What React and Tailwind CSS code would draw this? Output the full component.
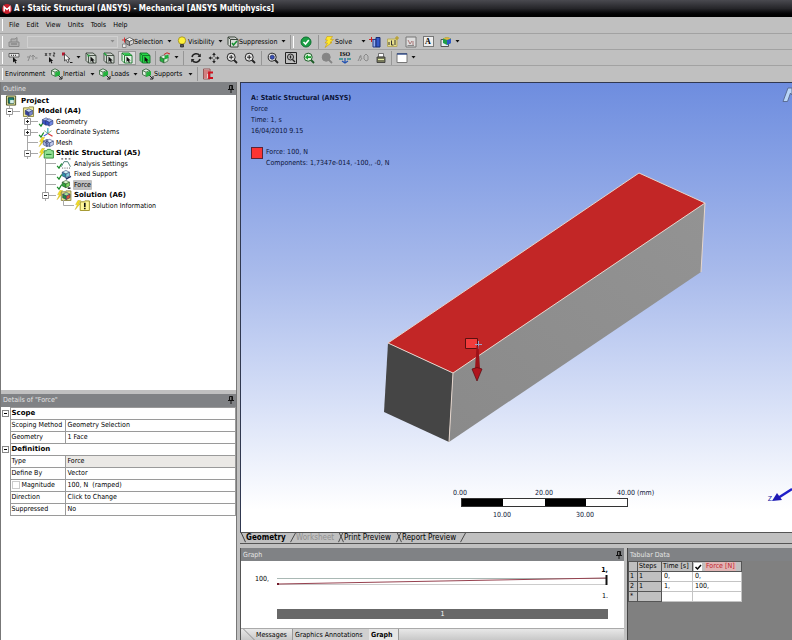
import React, { useState } from 'react';

const Icon = ({ children, className = 'w-3 h-3' }) => (
    <svg viewBox="0 0 12 12" className={`${className} shrink-0`} fill="none" stroke="#222" strokeWidth="1">
        {children}
    </svg>
);

const Cube = ({ top = '#c9d8f5', left = '#5a74c4', right = '#8fa4e0', line = '#2c3870', x = 0, y = 0 }) => (
    <g transform={`translate(${x} ${y})`} stroke={line} strokeWidth="0.6" strokeLinejoin="round">
        <path d="M1 3 L5 1 L9 3 L5 5 Z" fill={top} />
        <path d="M1 3 L5 5 L5 9 L1 7 Z" fill={left} />
        <path d="M5 5 L9 3 L9 7 L5 9 Z" fill={right} />
    </g>
);

const Pointer = ({ x = 0, y = 0, fill = '#111' }) => (
    <path transform={`translate(${x} ${y})`} d="M0 0 L0 5.5 L1.4 4.3 L2.4 6.5 L3.4 6 L2.5 4 L4.2 4 Z" fill={fill} stroke="none" />
);

const Bolt = ({ x = 0, y = 0 }) => (
    <path transform={`translate(${x} ${y})`} d="M3.5 0.5 L1 5 L3 5 L0.5 10.5 L6 4 L4 4 L6.5 0.5 Z" fill="#f7e11c" stroke="#c4ab1c" strokeWidth="0.5" />
);

// Heavier bolt for the Solve button
const SolveBolt = () => (
    <Icon>
        <path d="M4 0.5 H9.5 L7.5 3.5 H10.5 L7 6.5 H9 L2 11.5 L4.5 7 H2 L4.5 4 H2.5 Z" fill="#ffe92a" stroke="#c79a10" strokeWidth="0.6" />
    </Icon>
);

const Caret = ({ light }) => (
    <svg viewBox="0 0 5 3" className="h-[3px] w-[5px] shrink-0">
        <path d="M0.5 0 H4.5 L2.5 2.5 Z" fill={light ? '#8a8a8a' : '#111'} />
    </svg>
);

const Grip = () => <span className="mr-0.5 ml-0.5 h-3 w-px shrink-0 border-r border-white bg-[#8c8c8c]" />;
const Divider = ({ className = 'mx-0.5' }) => <span className={`${className} h-3.5 w-px shrink-0 bg-[#969696]`} />;

// Selection box with a cursor, one per pick filter
const PickIcon = ({ face = '#cfd6cf', edge = '#3c463c', mark }) => (
    <Icon>
        <path d="M1 1 H8 L11 3.5 V11 H3.5 L1 8.5 Z" fill={face} stroke={edge} strokeWidth="0.9" />
        <path d="M1 1 L3.5 3.5 H11 M3.5 3.5 V11" stroke={edge} strokeWidth="0.9" />
        {mark}
        <Pointer x={5.5} y={4.5} />
    </Icon>
);

const Magnifier = ({ children, fill = '#e6e6e6', stroke = '#222' }) => (
    <Icon>
        <path d="M8 8 L11 11" strokeWidth="1.8" stroke={stroke} />
        <circle cx="5.2" cy="5.2" r="4" fill={fill} stroke={stroke} />
        {children}
    </Icon>
);

const LoadIcon = () => (
    <Icon>
        <path d="M0.5 2.5 L4 0.8 L7.5 2.5 V6.5 L4 8.2 L0.5 6.5 Z" fill="#e4f2e4" stroke="#2d5a34" strokeWidth="0.8" />
        <path d="M0.5 2.5 L4 4.2 L7.5 2.5 M4 4.2 V8.2" stroke="#2d5a34" strokeWidth="0.8" />
        <path d="M4.2 4.4 L9 3 V7.2 L4.2 9 Z" fill="#22b33c" stroke="none" />
        <path d="M7.5 7.5 L10.5 10.5 M11 8 V11 H8" stroke="#111" strokeWidth="0.9" />
    </Icon>
);

const ToolButton = ({ label, className = 'w-[18px]', caret, children }) => (
    <button type="button" aria-label={label} className={`${className} flex h-3.5 shrink-0 items-center justify-center gap-[3px]`}>
        {children}
        {caret && <Caret />}
    </button>
);

const MenuButton = ({ label, icon, className, caret = true }) => (
    <button type="button" className={`${className} flex h-3.5 shrink-0 items-center whitespace-nowrap`}>
        {icon}
        <span>{label}</span>
        {caret && <span className="ml-auto"><Caret /></span>}
    </button>
);

const Pin = () => (
    <svg viewBox="0 0 6 8" className="h-2 w-1.5">
        <path d="M1.5 0.5 H4.5 V4.5 H1.5 Z M0 4.5 H6 M3 4.5 V8" fill="#777" stroke="#111" strokeWidth="1" />
        <path d="M4 0.5 V4.5" stroke="#111" strokeWidth="1.2" />
    </svg>
);

const PanelHeader = ({ title, pin = true }) => (
    <div className="flex h-[13px] shrink-0 items-center justify-between bg-[#808285] pr-0.5 pl-0.5 text-[#e4e4e4]">
        <h2>{title}</h2>
        {pin && <button type="button" aria-label={`Pin ${title}`}><Pin /></button>}
    </div>
);

const Check = () => <path d="M0.5 8.5 L2.5 11 L5.5 6" stroke="#188a28" strokeWidth="1.4" />;

const treeIcons = {
    project: (
        <>
            <path d="M3 1 H13 V11 H3 Z" fill="#e8e69a" stroke="#444a20" />
            <path d="M5 3 H11 V9 H5 Z" fill="#1b8a78" stroke="#133c38" />
            <path d="M7 5.5 H11 V9 H7 Z" fill="#d8efe8" stroke="none" />
        </>
    ),
    model: (
        <>
            <path d="M3 2 H8 L9 1 H14 V11.5 H3 Z" fill="#f0e99a" stroke="#8a8440" />
            <Cube x={4} y={2} left="#34409a" right="#7685cf" />
        </>
    ),
    geometry: (
        <>
            <Check />
            <Cube x={3} y={1} top="#a8bdf5" left="#3953c5" right="#6f88e6" />
            <Cube x={6.5} y={2} top="#a8bdf5" left="#3953c5" right="#6f88e6" />
        </>
    ),
    axes: (
        <>
            <Check />
            <path d="M10 7 V1" stroke="#22a5b5" strokeWidth="1.2" />
            <path d="M10 7 L5.5 10" stroke="#3250d8" strokeWidth="1.2" />
            <path d="M10 7 L15 10" stroke="#d83232" strokeWidth="1.2" />
            <path d="M6 4 L10 7 L14 4" stroke="#59a868" strokeWidth="0.8" />
        </>
    ),
    mesh: (
        <>
            <Bolt />
            <Cube x={4} y={1.5} top="#e4eafa" left="#a9b6e2" right="#c4cff0" />
            <Cube x={7} y={1.5} top="#e4eafa" left="#a9b6e2" right="#c4cff0" />
            <path d="M7 3.5 L11 5.5 M7 6 L11 8 M9 2.5 V9" stroke="#2c3870" strokeWidth="0.5" />
        </>
    ),
    structural: (
        <>
            <Bolt />
            <path d="M6 3 H8.5 L9.5 1.5 H13 L14 3 H16 V11 H6 Z" fill="#93e293" stroke="#2f8a35" />
            <path d="M8 7 H14" stroke="#15702a" />
        </>
    ),
    settings: (
        <>
            <Check />
            <path d="M5 1 H15" stroke="#222" strokeDasharray="2 2" />
            <path d="M5 9.5 L8 4 H12 L15 9.5" stroke="#2e6d60" strokeWidth="0.9" />
            <path d="M6 11 H15" stroke="#444" strokeDasharray="1 1.5" />
        </>
    ),
    support: (
        <>
            <Check />
            <Cube x={5} y={0.5} top="#d0f2f5" left="#2b91a5" right="#83ced9" />
            <path d="M10 11 L15.5 8" stroke="#1a2c60" strokeWidth="1.6" />
        </>
    ),
    force: (
        <>
            <Check />
            <Cube x={5} y={0.5} top="#d8f5c8" left="#2fa53a" right="#86d865" line="#1d4a1d" />
            <path d="M12 10 H15" stroke="#111" strokeWidth="1.6" />
        </>
    ),
    solution: (
        <>
            <Bolt />
            <path d="M5 2 H9 L10 1 H15.5 V11.5 H5 Z" fill="#efe58a" stroke="#8a8440" />
            <Cube x={5.5} y={1.5} top="#a8e290" left="#228a3a" right="#d85038" />
        </>
    ),
    info: (
        <>
            <Bolt />
            <path d="M6 2 H10 L11 1 H16 V11.5 H6 Z" fill="#fff79a" stroke="#9a8c20" />
            <path d="M11 3 V7.5 M11 8.5 V10" stroke="#111" strokeWidth="1.8" />
        </>
    ),
};

const tree = [
    { label: 'Project', icon: 'project', bold: true, indent: 'pl-0.5' },
    { label: 'Model (A4)', icon: 'model', bold: true, indent: 'pl-[5px]', box: '-' },
    { label: 'Geometry', icon: 'geometry', indent: 'pl-[23px]', box: '+' },
    { label: 'Coordinate Systems', icon: 'axes', indent: 'pl-[23px]', box: '+' },
    { label: 'Mesh', icon: 'mesh', indent: 'pl-[23px]', box: 'line' },
    { label: 'Static Structural (A5)', icon: 'structural', bold: true, indent: 'pl-[23px]', box: '-' },
    { label: 'Analysis Settings', icon: 'settings', indent: 'pl-[41px]', box: 'line' },
    { label: 'Fixed Support', icon: 'support', indent: 'pl-[41px]', box: 'line' },
    { label: 'Force', icon: 'force', indent: 'pl-[41px]', box: 'line', selected: true },
    { label: 'Solution (A6)', icon: 'solution', bold: true, indent: 'pl-[41px]', box: '-' },
    { label: 'Solution Information', icon: 'info', indent: 'pl-[59px]', box: 'end' },
];

const Branch = ({ type }) => (
    <svg viewBox="0 0 14 11" className="h-[11px] w-3.5 shrink-0" fill="none" stroke="#a9a9a9" strokeWidth="1">
        {type === 'end' ? <path d="M3.5 0 V5.5 H14" /> : <path d="M3.5 0 V11 M3.5 5.5 H14" />}
        {(type === '+' || type === '-') && <path d="M0.5 2.5 H6.5 V8.5 H0.5 Z" fill="#fff" stroke="#999" />}
        {(type === '+' || type === '-') && <path d="M2 5.5 H5" stroke="#222" />}
        {type === '+' && <path d="M3.5 4 V7" stroke="#222" />}
    </svg>
);

const Outline = () => (
    <section className="flex min-h-0 flex-5 flex-col">
        <PanelHeader title="Outline" />
        <ul className="flex grow flex-col overflow-hidden bg-white">
            {tree.map((node) => (
                <li key={node.label} className="h-[11px] shrink-0 even:h-2.5">
                    <button type="button" className={`${node.indent} flex h-full items-center text-left whitespace-nowrap`}>
                        {node.box && <Branch type={node.box} />}
                        <svg viewBox="0 0 17 12" className="h-[11px] w-[17px] shrink-0" fill="none">
                            {treeIcons[node.icon]}
                        </svg>
                        <span className={`${node.bold ? "font-['DejaVu_Sans',sans-serif] font-bold" : ''} ${node.selected ? 'bg-[#c0c0c0]' : ''} rounded-[1px] px-px leading-[10px]`}>
                            {node.label}
                        </span>
                    </button>
                </li>
            ))}
        </ul>
    </section>
);

const details = [
    { group: 'Scope' },
    { name: 'Scoping Method', value: 'Geometry Selection' },
    { name: 'Geometry', value: '1 Face' },
    { group: 'Definition' },
    { name: 'Type', value: 'Force', readOnly: true },
    { name: 'Define By', value: 'Vector' },
    { name: 'Magnitude', value: '100, N  (ramped)', checkbox: true },
    { name: 'Direction', value: 'Click to Change' },
    { name: 'Suppressed', value: 'No' },
];

const Details = () => (
    <section className="flex min-h-0 flex-4 flex-col bg-white">
        <PanelHeader title={'Details of "Force"'} />
        <table className="w-full table-fixed border-collapse">
            <colgroup>
                <col className="w-[9px]" />
                <col className="w-[55px]" />
                <col />
            </colgroup>
            <tbody>
                {details.map((row) =>
                    row.group ? (
                        <tr key={row.group} className="h-3">
                            <td className="p-0">
                                <button type="button" aria-label={`Collapse ${row.group}`} className="ml-px flex h-[7px] w-[7px] items-center justify-center border border-[#888]">
                                    <span className="h-px w-[3px] bg-black" />
                                </button>
                            </td>
                            <th colSpan={2} className="border border-[#9a9a9a] px-px py-0 text-left font-['DejaVu_Sans',sans-serif] leading-[11px] font-bold">{row.group}</th>
                        </tr>
                    ) : (
                        <tr key={row.name} className="h-3">
                            <td className="p-0" />
                            <td className="border border-[#9a9a9a] px-px py-0 leading-[11px] whitespace-nowrap">
                                {row.checkbox ? (
                                    <label className="flex items-center gap-0.5">
                                        <input type="checkbox" className="h-2 w-2 appearance-none border border-[#ccc]" />
                                        {row.name}
                                    </label>
                                ) : row.name}
                            </td>
                            <td className={`${row.readOnly ? 'bg-[#ebe9e6]' : ''} border border-[#9a9a9a] px-0.5 py-0 leading-[11px] whitespace-pre`}>{row.value}</td>
                        </tr>
                    )
                )}
            </tbody>
        </table>
    </section>
);

const Toolbars = () => (
    <header className="shrink-0 bg-[#c0c0c0]">
        <nav className="flex h-[17px] items-center border-b border-[#a2a2a2]">
            <Grip />
            <div className="flex gap-[7px] pl-1">
                {['File', 'Edit', 'View', 'Units', 'Tools', 'Help'].map((item) => (
                    <button key={item} type="button">{item}</button>
                ))}
            </div>
        </nav>

        <div className="flex h-4 items-center border-b border-[#a2a2a2]">
            <Grip />
            <ToolButton label="Worksheet" className="w-[18px]">
                <Icon>
                    <path d="M1 6 H11 V10.5 H1 Z M3 6 V3 H7 L9 1.5 V6" stroke="#888" fill="#b0b0b0" />
                    <path d="M3 8 H9" stroke="#777" />
                </Icon>
            </ToolButton>
            <button type="button" aria-label="Name selection" className="ml-1 flex h-3 w-[91px] items-center justify-end border border-[#d0d0d0] pr-0.5">
                <Caret light />
            </button>
            <MenuButton
                label="Selection"
                className="ml-1 w-[50px]"
                icon={
                    <Icon>
                        <path d="M0 4 H5 M2.5 1.5 V6.5" stroke="#d33" />
                        <Cube x={2.5} y={0.5} top="#f4f4f4" left="#9a9a9a" right="#d5d5d5" line="#333" />
                        <path d="M0.5 8 H4 V11.5 H0.5 Z" fill="#eee" stroke="#888" />
                    </Icon>
                }
            />
            <MenuButton
                label="Visibility"
                className="ml-1 w-[47px]"
                icon={
                    <Icon>
                        <circle cx="6" cy="4.5" r="3.7" fill="#fff23a" stroke="#99861a" strokeWidth="0.8" />
                        <path d="M4.5 8.5 H7.5 V11 H4.5 Z" fill="#555" stroke="#222" strokeWidth="0.7" />
                    </Icon>
                }
            />
            <MenuButton
                label="Suppression"
                className="ml-1 w-[59px]"
                icon={
                    <Icon>
                        <path d="M1 1 H8 L11 3.5 V11 H3.5 L1 8.5 Z M1 1 L3.5 3.5 H11 M3.5 3.5 V11" stroke="#3c463c" fill="#d8ded8" />
                        <path d="M5 7 L6.5 9 L10 5" stroke="#159030" strokeWidth="1.5" />
                    </Icon>
                }
            />
            <Divider className="ml-1" />
            <Grip />
            <ToolButton label="Check" className="w-5">
                <Icon>
                    <circle cx="6" cy="6" r="5" fill="#1ba045" stroke="#0d7030" />
                    <path d="M3.5 6 L5.5 8 L8.8 4" stroke="#fff" strokeWidth="1.6" />
                </Icon>
            </ToolButton>
            <Divider className="mr-1 ml-0.5" />
            <MenuButton label="Solve" className="w-[43px]" icon={<SolveBolt />} />
            <ToolButton label="New section plane" className="w-[18px]">
                <Icon>
                    <path d="M0 3.5 H5 M2.5 1 V6" stroke="#c22" />
                    <path d="M4 3.5 H7 V11 H4 Z" fill="#94aef0" stroke="#253c8a" />
                    <path d="M7 1.5 H11 V11 H7 Z" fill="#3559c9" stroke="#162c70" />
                </Icon>
            </ToolButton>
            <ToolButton label="New annotation">
                <Icon>
                    <path d="M0.5 3 H10 V10.5 H0.5 Z" fill="#e8e08c" stroke="#b6aa60" />
                    <path d="M2 9 V6 M4.5 4.5 V9 H6.5 M8 4 V9" stroke="#333" />
                    <path d="M8 2 H12 M10 0 V4" stroke="#b89a10" />
                </Icon>
            </ToolButton>
            <ToolButton label="New chart" className="w-[17px]">
                <Icon>
                    <path d="M1 1 H11 V11 H1 Z" fill="#ddd" stroke="#777" />
                    <path d="M3 4 L5 8 L7 5 M8 5 V9" stroke="#a77" />
                    <path d="M2.5 9.5 H9" stroke="#888" />
                </Icon>
            </ToolButton>
            <ToolButton label="Comment">
                <span className="flex h-[11px] w-[11px] items-center justify-center border border-[#777] bg-[#eee] font-['Liberation_Serif',serif] text-[8px] leading-none font-bold">A</span>
            </ToolButton>
            <ToolButton label="New figure" className="w-[26px]" caret>
                <Icon>
                    <path d="M1 3.5 H8.5 V10.5 H1 Z" fill="#e8eef4" stroke="#555" />
                    <path d="M3 2.5 L7 1 L11 2.5 V7 L7 9 L3 7 Z" fill="#1f9e48" stroke="none" />
                    <path d="M7 4 L11 2.5 V7 L7 9 Z" fill="#2d58c8" stroke="none" />
                    <path d="M3 2.5 L7 1 L11 2.5 L7 4 Z" fill="#e0b040" stroke="none" />
                </Icon>
            </ToolButton>
        </div>

        <div className="flex h-4 items-center border-b border-[#a2a2a2]">
            <Grip />
            <ToolButton label="Label">
                <Icon><path d="M1 1.5 H11 V5 H1 Z" fill="#e8e8e8" stroke="#444" strokeWidth="0.8" /><path d="M3 3.3 H9" strokeDasharray="1 1" /><Pointer x={5} y={5} /></Icon>
            </ToolButton>
            <ToolButton label="Direction">
                <Icon><path d="M2 9 L4.5 3 M1 5 H4 M7 8 V3 L5.5 5 M7 3 L9 5 M9 6 H11.5" stroke="#8a8a8a" /></Icon>
            </ToolButton>
            <ToolButton label="Coordinates">
                <Icon><path d="M1 1 L3 4 M3 1 L1 4 M5 1 L6 2.5 L7 1 M6 2.5 V4 M9 1 H11 L9 4 H11" strokeWidth="0.8" /><Pointer x={5} y={5} /></Icon>
            </ToolButton>
            <ToolButton label="Select mode" className="w-[23px]" caret>
                <Icon>
                    <path d="M1 0.5 H4 V3.5 H1 Z" fill="#b81830" stroke="none" />
                    <path d="M3.5 2 V9 L5.2 7.5 L6.5 10.5 L8 9.8 L6.8 7 H9 Z" fill="#fff" stroke="#333" strokeWidth="0.8" />
                    <path d="M9 10.5 H11.5" />
                </Icon>
            </ToolButton>
            <ToolButton label="Vertex"><PickIcon mark={<path d="M2.5 2.5 H4.5 V4.5 H2.5 Z" fill="#1fa03a" stroke="none" />} /></ToolButton>
            <ToolButton label="Edge"><PickIcon mark={<path d="M1 1 L3.5 3.5" stroke="#1fa03a" strokeWidth="1.6" />} /></ToolButton>
            <ToolButton label="Face" className="w-[18px] border border-[#999] bg-[#dcdcdc]"><PickIcon face="#e2f2e4" edge="#177528" mark={<path d="M1.5 1.2 H8 L10.5 3.3 H4 Z" fill="#28c848" stroke="none" />} /></ToolButton>
            <ToolButton label="Body" className="w-[17px]"><PickIcon face="#28d848" edge="#127528" /></ToolButton>
            <Divider className="mr-px ml-0.5" />
            <ToolButton label="Extend" className="w-6" caret>
                <Icon>
                    <Cube x={0} y={2} top="#e8f4e8" left="#25b040" right="#d0ecd0" line="#2d5a34" />
                    <path d="M5.5 4 L9.5 2.5 V6 L5.5 7.5 Z" fill="#1fae3a" stroke="none" />
                    <path d="M5 2.5 L8 0.8 L11 2" stroke="#c22" />
                </Icon>
            </ToolButton>
            <Divider className="mr-[3px] ml-0.5" />
            <ToolButton label="Rotate">
                <Icon><path d="M2 5 C3 1 8 1 9.5 3.5 M10 7 C9 11 4 11 2.5 8.5" strokeWidth="1.5" /><path d="M10.8 1.5 V5 H7.5 Z M1.2 10.5 V7 H4.5 Z" fill="#222" stroke="none" /></Icon>
            </ToolButton>
            <ToolButton label="Pan">
                <Icon><path d="M6 2 V4.8 M6 7.2 V10 M2 6 H4.8 M7.2 6 H10" /><path d="M6 0.5 L7.8 3 H4.2 Z M6 11.5 L7.8 9 H4.2 Z M0.5 6 L3 4.2 V7.8 Z M11.5 6 L9 4.2 V7.8 Z" fill="#222" stroke="none" /></Icon>
            </ToolButton>
            <ToolButton label="Zoom"><Magnifier><path d="M5.2 3 V7.4 M3 5.2 H7.4" /></Magnifier></ToolButton>
            <ToolButton label="Zoom in"><Magnifier><path d="M5.2 3 V7.4 M3 5.2 H7.4" /></Magnifier></ToolButton>
            <Divider />
            <ToolButton label="Zoom to fit">
                <Magnifier><path d="M3.2 4 L5.2 3 L7.2 4 V6.4 L5.2 7.4 L3.2 6.4 Z" fill="#3850b8" stroke="#1b2450" strokeWidth="0.6" /></Magnifier>
            </ToolButton>
            <ToolButton label="Box zoom">
                <Icon><path d="M0.5 0.5 H11.5 V11.5 H0.5 Z" /><circle cx="5.5" cy="5" r="3" /><path d="M7.5 7.5 L10 10 M5.5 3.5 V6.5" strokeWidth="1.4" /></Icon>
            </ToolButton>
            <ToolButton label="Previous view"><Magnifier fill="#dff5df" stroke="#1a5a25"><path d="M2 5.2 L5 2.6 V4.3 H8.2 V6.1 H5 V7.8 Z" fill="#18a030" stroke="none" /></Magnifier></ToolButton>
            <ToolButton label="Next view"><Magnifier fill="#858585" stroke="#858585" /></ToolButton>
            <ToolButton label="Isometric">
                <span className="flex flex-col items-center">
                    <span className="font-['Liberation_Serif',serif] text-[6px] leading-[5px] font-bold">ISO</span>
                    <svg viewBox="0 0 12 7" className="h-[7px] w-3" fill="none">
                        <path d="M0 2 H4 M8 2 H12" stroke="#2f8f90" strokeWidth="1.5" />
                        <path d="M6 1 V6 M3 4 L6 6 L9 4" stroke="#2050b0" strokeWidth="1.2" />
                    </svg>
                </span>
            </ToolButton>
            <ToolButton label="Look at">
                <Icon><path d="M1 9 L4 3 M3 9 L5 6 M2 5 H5" stroke="#8a8a8a" /><path d="M7 4 L9 2 L11 4 V8 L9 9 L7 7 Z" stroke="#8a8a8a" /></Icon>
            </ToolButton>
            <ToolButton label="Print preview">
                <Icon><path d="M3.5 1.5 H8.5 V5 H3.5 Z" fill="#fff" stroke="#555" strokeWidth="0.8" /><path d="M2 5 H10 V10.5 H2 Z" fill="#77795c" stroke="#333" strokeWidth="0.8" /><path d="M3 7.5 H9" stroke="#e4eca0" /></Icon>
            </ToolButton>
            <Divider className="mx-px" />
            <ToolButton label="Viewports" className="w-[25px]" caret>
                <Icon><path d="M1 1.5 H11 V10.5 H1 Z" fill="#fff" stroke="#777" /><path d="M1 2 H11" stroke="#2f4a88" strokeWidth="1.4" /></Icon>
            </ToolButton>
        </div>

        <div className="flex h-4 items-center">
            <Grip />
            <span className="w-[46px]">Environment</span>
            <MenuButton label="Inertial" className="w-11" icon={<LoadIcon />} />
            <MenuButton label="Loads" className="ml-1 w-[39px]" icon={<LoadIcon />} />
            <MenuButton label="Supports" className="ml-1 w-[51px]" icon={<LoadIcon />} />
            <Divider className="mx-1" />
            <ToolButton label="Results" className="w-3">
                <Icon><path d="M1.5 1 H8 V11 H1.5 Z" fill="#e4d0d0" stroke="#8a3a3a" strokeWidth="0.8" /><path d="M2 3 H7.5 M2 5 H7.5 M2 7 H5 M2 9 H5" stroke="#c03030" /><path d="M11 4.5 H7 V10 H11" stroke="#d0101d" strokeWidth="1.8" /></Icon>
            </ToolButton>
        </div>
    </header>
);

const ScaleRuler = () => (
    <div className="absolute bottom-3 left-[212px] w-[212px] leading-[9px]">
        <div className="flex whitespace-nowrap">
            <span className="w-[82px]">0.00</span>
            <span className="w-[82px]">20.00</span>
            <span>40.00 (mm)</span>
        </div>
        <div className="ml-2 grid h-[9px] w-[167px] grid-cols-4 border border-[#333] bg-white">
            <span className="bg-black" />
            <span />
            <span className="bg-black" />
            <span />
        </div>
        <div className="mt-1 ml-10 flex">
            <span className="w-[83px]">10.00</span>
            <span>30.00</span>
        </div>
    </div>
);

const Viewport = () => (
    <div className="relative min-h-0 flex-1 overflow-hidden border-t border-l border-[#303850] bg-linear-to-b from-[#6e8ddf] via-[#a8baeb] via-42% to-white to-95% text-[#0c1438]">
        <svg viewBox="0 0 552 450" className="absolute top-0 left-0 h-[450px] w-[552px]">
            <defs>
                <linearGradient id="side" x1="0" y1="1" x2="1" y2="0">
                    <stop offset="0" stopColor="#8a8a8a" />
                    <stop offset="1" stopColor="#939393" />
                </linearGradient>
            </defs>
            <path d="M147 260 L212 290 L208 359 L143 329 Z" fill="#454545" />
            <path d="M212 290 L464 120 L460 189 L208 359 Z" fill="url(#side)" />
            <path d="M147 260 L398 90 L464 120 L212 290 Z" fill="#c22626" />
            <path d="M147 260 L398 90 L464 120 L460 189 M147 260 L212 290 L464 120 M212 290 L208 359" fill="none" stroke="#e6d6cc" strokeWidth="1" />
            <path d="M224.5 255.5 H236.5 V265.5 H224.5 Z" fill="#f23c3c" stroke="#5a1010" />
            <path d="M234 261.5 H241 M237.5 258 V266" stroke="#9aa0c8" strokeWidth="1" />
            <path d="M235.5 263 H237.5 L239 286 H234 Z" fill="#9c1219" />
            <path d="M231 286 Q236 283 241 286 L236 298 Z" fill="#b0141d" stroke="#5a0a10" strokeWidth="0.7" />
        </svg>
        <div className="relative pt-2.5 pl-2.5 leading-[11px]">
            <h1 className="font-bold">A: Static Structural (ANSYS)</h1>
            <p>Force</p>
            <p>Time: 1, s</p>
            <p>16/04/2010 9.15</p>
            <div className="mt-2.5 flex gap-[3px]">
                <span className="h-3 w-3 border border-[#5a2438] bg-[#fb3434]" />
                <div>
                    <p>Force: 100, N</p>
                    <p>Components: 1,7347e-014, -100,, -0, N</p>
                </div>
            </div>
        </div>
        <svg viewBox="0 0 10 16" className="absolute top-1 right-0 h-4 w-2.5">
            <path d="M1 14.5 L6 1 H10 V8 L8.5 6 L5.5 14.5 Z" fill="#b9d6f8" stroke="#56668c" strokeWidth="0.9" />
        </svg>
        <ScaleRuler />
        <div className="absolute right-0 bottom-7 flex items-end">
            <span className="text-[#2020a0]">Z</span>
            <svg viewBox="0 0 20 18" className="h-[18px] w-5">
                <path d="M20 3 L6 12" stroke="#1f1fc8" strokeWidth="2.4" />
                <path d="M0 15 L5 7 L10 14 Z" fill="#1c18b4" />
            </svg>
        </div>
    </div>
);

const Slash = ({ cross }) => (
    <svg viewBox="0 0 6 12" className="h-full w-1.5 shrink-0" fill="none" stroke="#333">
        <path d={cross ? 'M1 0 L6 11 M5 0 L0 11' : 'M6 0 L0 11'} />
    </svg>
);

const ViewTabs = () => (
    <div className="flex h-3 shrink-0 items-center border-y border-[#555] bg-[#c0c0c0] text-[8px] leading-none whitespace-nowrap">
        <svg viewBox="0 0 6 12" className="h-full w-1.5 shrink-0" fill="none" stroke="#222"><path d="M1 0 L6 11" /></svg>
        <button type="button" className="w-11 text-left font-bold">Geometry</button>
        <Slash />
        <button type="button" disabled className="w-[42px] text-left text-[#909090]">Worksheet</button>
        <Slash cross />
        <button type="button" className="w-[52px] text-left">Print Preview</button>
        <Slash cross />
        <button type="button" className="w-[58px] text-left">Report Preview</button>
        <Slash />
    </div>
);

const Graph = () => (
    <section className="flex w-[384px] shrink-0 flex-col border-l border-[#555]">
        <PanelHeader title="Graph" />
        <div className="flex-1 bg-white pt-1 pr-4 pl-3.5 leading-[10px]">
            <p className="text-right font-bold">1,</p>
            <div className="flex h-3 items-start">
                <span className="w-[22px] shrink-0 leading-[9px]">100,</span>
                <svg viewBox="0 0 332 12" preserveAspectRatio="none" className="h-3 min-w-0 flex-1">
                    <path d="M0 3.5 H331" stroke="#a9b8b4" />
                    <path d="M0 9.5 H331" stroke="#ccc" />
                    <path d="M1 9 L330 3" stroke="#96404e" />
                    <path d="M0 8 H2 V10 H0 Z" fill="#701828" />
                    <path d="M330.5 0 V10" stroke="#111" strokeWidth="2" />
                </svg>
            </div>
            <p className="mt-1 text-right">1.</p>
            <div className="mt-2 ml-[22px] flex h-2.5 items-center justify-center bg-[#686868] text-white">1</div>
        </div>
        <div className="flex h-3 shrink-0 items-stretch border-t border-[#aaa] bg-linear-to-b from-[#e8e8e8] to-[#c8c8c8] whitespace-nowrap">
            <svg viewBox="0 0 15 12" className="h-full w-[15px]" fill="none" stroke="#888"><path d="M2 0 L14 12" /></svg>
            <button type="button" className="w-[37px] border-r border-[#999] text-left">Messages</button>
            <button type="button" className="w-[76px] bg-[#d0d0d0] pl-0.5 text-left">Graphics Annotations</button>
            <button type="button" className="w-[30px] border-r border-[#999] bg-[#e6e6e6] pl-0.5 text-left font-bold">Graph</button>
        </div>
    </section>
);

const TabularData = () => {
    const [showForce, setShowForce] = useState(true);
    const cell = 'border border-[#c4c4c4] bg-white px-0.5 py-0';
    const head = 'border border-[#555] bg-[#c0c0c0] px-px py-0 text-left font-normal';

    return (
        <section className="min-w-0 flex-1 border-l border-[#444] bg-[#808080]">
            <PanelHeader title="Tabular Data" pin={false} />
            <table className="w-[113px] table-fixed border-collapse leading-[9px] whitespace-nowrap">
                <colgroup>
                    <col className="w-[9px]" />
                    <col className="w-6" />
                    <col className="w-[31px]" />
                    <col className="w-[49px]" />
                </colgroup>
                <thead>
                    <tr className="h-2.5">
                        <th className={head} />
                        <th className={head}>Steps</th>
                        <th className={head}>Time [s]</th>
                        <th className={head}>
                            <label className="flex items-center gap-[3px]">
                                <span className="relative flex h-2 w-2">
                                    <input type="checkbox" checked={showForce} onChange={(e) => setShowForce(e.target.checked)} className="h-2 w-2 appearance-none bg-white" />
                                    {showForce && (
                                        <svg viewBox="0 0 8 8" className="pointer-events-none absolute inset-0" fill="none" stroke="#000" strokeWidth="1.5"><path d="M1.5 4 L3.5 6 L7 2" /></svg>
                                    )}
                                </span>
                                <span className="bg-[#e0b4b4] px-px text-[#c01c2c]">Force [N]</span>
                            </label>
                        </th>
                    </tr>
                </thead>
                <tbody>
                    {[['1', '1', '0,', '0,'], ['2', '1', '1,', '100,'], ['*', '', '', '']].map(([id, step, time, force]) => (
                        <tr key={id} className="h-2.5">
                            <th className={head}>{id}</th>
                            <td className="border border-[#555] bg-[#c0c0c0] px-px py-0">{step}</td>
                            <td className={cell}>{time}</td>
                            <td className={cell}>{force}</td>
                        </tr>
                    ))}
                </tbody>
            </table>
        </section>
    );
};

const App = () => (
    <div className="flex h-screen flex-col overflow-hidden bg-[#c0c0c0] font-['DejaVu_Sans_Condensed','DejaVu_Sans',sans-serif] text-[7px] leading-[10px] text-black">
        <div className="flex h-[17px] shrink-0 items-center gap-0.5 bg-linear-to-b from-[#4a4a50] via-[#26262a] to-black pl-0.5 text-white">
            <svg viewBox="0 0 10 10" className="h-2.5 w-2.5">
                <circle cx="5" cy="5" r="5" fill="#c91f2d" />
                <path d="M2.2 7.5 V3 L5 5.5 L7.8 3 V7.5" fill="none" stroke="#fff" strokeWidth="1.5" />
            </svg>
            <span className="text-[8px] font-bold whitespace-nowrap">A : Static Structural (ANSYS) - Mechanical [ANSYS Multiphysics]</span>
        </div>
        <Toolbars />
        <main className="flex min-h-0 flex-1">
            <aside className="flex w-[237px] shrink-0 flex-col gap-1 border-r border-l border-[#777]">
                <Outline />
                <Details />
            </aside>
            <div className="ml-[3px] flex min-w-0 flex-1 flex-col">
                <Viewport />
                <ViewTabs />
                <div className="mt-1 flex h-[92px] shrink-0 gap-[3px]">
                    <Graph />
                    <TabularData />
                </div>
            </div>
        </main>
    </div>
);

export default App;
